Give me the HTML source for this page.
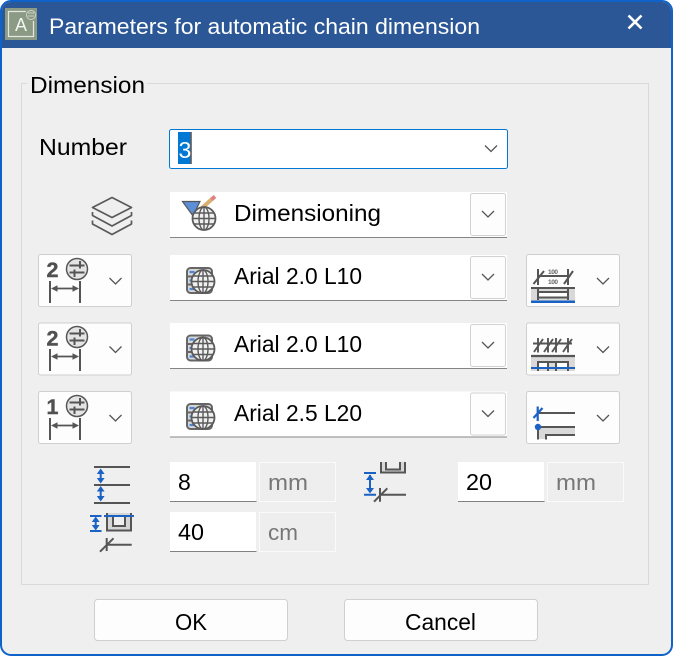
<!DOCTYPE html>
<html><head><meta charset="utf-8"><style>
html,body{margin:0;padding:0;background:#fff;width:673px;height:656px;overflow:hidden}
svg{display:block;position:absolute;left:0;top:0}
text{font-family:"Liberation Sans",sans-serif;fill:#000}
</style></head><body>
<svg width="673" height="656" viewBox="0 0 673 656" xmlns="http://www.w3.org/2000/svg">
<defs>
<g id="chev"><path d="M0 0L6 6L12 0" fill="none" stroke="#555" stroke-width="1.300"/></g>
<g id="globe" fill="none" stroke="#5a5a5a" stroke-width="1.400">
<circle cx="0" cy="0" r="11.500" fill="#f0f0f0" stroke-width="1.800"/>
<ellipse cx="0" cy="0" rx="5" ry="11.500"/>
<path d="M0 -11.500V11.500M-11.500 0H11.500M-10 -5.500H10M-10 5.500H10"/>
</g>
<g id="srv">
<rect x="187" y="1" width="25" height="25" rx="3.500" fill="#d8d8d8" stroke="#666" stroke-width="2"/>
<path d="M187 9.500H212M187 17.500H212" stroke="#666" stroke-width="2"/>
<path d="M189.500 5H194.500M189.500 13.500H194.500M189.500 22H194.500" stroke="#4a86d8" stroke-width="2.200"/>
<use href="#globe" transform="translate(203,14.500)"/>
</g>
<g id="dim">
<path d="M50 0V22M80 0V22" stroke="#555" stroke-width="2"/>
<path d="M53 7.500H77" stroke="#555" stroke-width="1.800"/>
<path d="M51 7.500L57.500 4.300V10.700ZM79 7.500L72.500 4.300V10.700Z" fill="#555"/>
</g>
<g id="eq">
<circle cx="77" cy="0" r="10.500" fill="#e4e4e4" stroke="#555" stroke-width="1.500"/>
<path d="M69.500 -3.500H84.500M69.500 3.500H84.500M80 -8V-0.500M74.500 0.500V8" stroke="#555" stroke-width="2" fill="none"/>
</g>
<g id="combo">
<rect x="170" y="0" width="337" height="45" fill="#fff"/>
<path d="M170 45.500H507" stroke="#858585" stroke-width="1"/>
<rect x="470.500" y="1.500" width="35" height="42" rx="2" fill="#fdfdfd" stroke="#d2d2d2"/>
<use href="#chev" transform="translate(482,19)"/>
</g>
<g id="btn">
<rect x="38.500" y="0.500" width="93" height="52" rx="2" fill="#fdfdfd" stroke="#cfcfcf"/>
<use href="#chev" transform="translate(109.500,24)"/>
</g>
<g id="rbtn">
<rect x="526.500" y="0.500" width="93" height="52" rx="2" fill="#fdfdfd" stroke="#cfcfcf"/>
<use href="#chev" transform="translate(597,24)"/>
</g>
</defs>

<!-- window -->
<rect x="1" y="1" width="671" height="654" rx="10" fill="#efefef" stroke="#0f62c8" stroke-width="2"/>
<path d="M2 48V11A9 9 0 0 1 11 2H662A9 9 0 0 1 671 11V48Z" fill="#2b5797"/>

<!-- title icon -->
<rect x="5" y="8" width="32" height="32" fill="#8b9a85"/>
<rect x="8.500" y="11.500" width="25" height="25" fill="none" stroke="#e4e8e0" stroke-width="1.200"/>
<rect x="26" y="8" width="11" height="13" fill="#8b9a85"/>
<circle cx="31" cy="15" r="4.500" fill="none" stroke="#cdd3c8"/>
<path d="M28 13H34M28 16H34" stroke="#cdd3c8"/>
<text x="15" y="31" font-size="18" style="fill:#f3f5f0" textLength="12" lengthAdjust="spacingAndGlyphs">A</text>
<text x="49" y="34" font-size="22" style="fill:#fff" textLength="431" lengthAdjust="spacingAndGlyphs">Parameters for automatic chain dimension</text>
<path d="M628.500 15.500L641.500 28.500M641.500 15.500L628.500 28.500" stroke="#fff" stroke-width="2.600"/>

<!-- group -->
<rect x="21.500" y="83.500" width="627" height="501" fill="none" stroke="#d9d9d9"/>
<rect x="27" y="74" width="120" height="20" fill="#efefef"/>
<text x="30" y="93" font-size="23" textLength="115" lengthAdjust="spacingAndGlyphs">Dimension</text>

<!-- Number -->
<text x="39" y="155" font-size="23" textLength="88" lengthAdjust="spacingAndGlyphs">Number</text>
<rect x="169.500" y="129.500" width="338" height="39" rx="2" fill="#fff" stroke="#0078d4"/>
<rect x="178" y="132" width="13" height="32" fill="#0078d4"/>
<rect x="191" y="132" width="1" height="32" fill="#c8641e"/>
<text x="178.500" y="158" font-size="23" style="fill:#fff">3</text>
<use href="#chev" transform="translate(485,145.500)"/>

<!-- layers -->
<g fill="none" stroke="#5a5a5a" stroke-width="1.700" stroke-linejoin="round">
<path d="M92.500 207.500L112 197.500L131.500 207.500L112 217.500Z"/>
<path d="M92.500 212L92.500 215.500L112 226L131.500 215.500L131.500 212"/>
<path d="M92.500 220.500L92.500 224L112 234.500L131.500 224L131.500 220.500"/>
</g>

<!-- combos -->
<use href="#combo" transform="translate(0,192)"/>
<use href="#combo" transform="translate(0,255)"/>
<use href="#combo" transform="translate(0,323)"/>
<use href="#combo" transform="translate(0,391.500)"/>
<text x="234" y="221" font-size="23" textLength="147" lengthAdjust="spacingAndGlyphs">Dimensioning</text>
<text x="234" y="284" font-size="23" textLength="128" lengthAdjust="spacingAndGlyphs">Arial 2.0 L10</text>
<text x="234" y="352" font-size="23" textLength="128" lengthAdjust="spacingAndGlyphs">Arial 2.0 L10</text>
<text x="234" y="421" font-size="23" textLength="128" lengthAdjust="spacingAndGlyphs">Arial 2.5 L20</text>

<!-- dimensioning icon -->
<path d="M182.500 201.500H200L193 216Z" fill="#5d8fd9" stroke="#555" stroke-width="1.200"/>
<path d="M202 208L212 199" stroke="#d9b070" stroke-width="4"/>
<path d="M211.500 199.500L215 196.500" stroke="#e08080" stroke-width="4"/>
<use href="#globe" transform="translate(204,218.500)"/>

<!-- server icons -->
<use href="#srv" transform="translate(0,267)"/>
<use href="#srv" transform="translate(0,334.500)"/>
<use href="#srv" transform="translate(0,403)"/>

<!-- left buttons -->
<use href="#btn" transform="translate(0,254)"/>
<use href="#btn" transform="translate(0,322.500)"/>
<use href="#btn" transform="translate(0,391)"/>
<text x="46.500" y="277" font-size="21.500" font-weight="700" style="fill:#505050;stroke:#505050;stroke-width:.4">2</text>
<text x="46.500" y="345.500" font-size="21.500" font-weight="700" style="fill:#505050;stroke:#505050;stroke-width:.4">2</text>
<text x="46.500" y="414" font-size="21.500" font-weight="700" style="fill:#505050;stroke:#505050;stroke-width:.4">1</text>
<use href="#eq" transform="translate(0,269)"/>
<use href="#eq" transform="translate(0,337)"/>
<use href="#eq" transform="translate(0,406)"/>
<use href="#dim" transform="translate(0,281)"/>
<use href="#dim" transform="translate(0,349)"/>
<use href="#dim" transform="translate(0,418)"/>

<!-- right buttons -->
<use href="#rbtn" transform="translate(0,254)"/>
<use href="#rbtn" transform="translate(0,322.500)"/>
<use href="#rbtn" transform="translate(0,391)"/>

<!-- right icon 1 -->
<rect x="531" y="287" width="44" height="15" fill="#d9d9d9"/>
<rect x="538" y="291" width="30" height="6" fill="#fff"/>
<path d="M538 269V285M568 269V285M533.500 284L544 271M564 284L573 271M538 276H568" stroke="#555" stroke-width="2" fill="none"/>
<text x="548" y="274" font-size="6.500" font-weight="700" style="fill:#666" textLength="10">100</text>
<text x="548" y="284" font-size="6.500" font-weight="700" style="fill:#666" textLength="10">100</text>
<path d="M531 288H575M538 292H568M538 297.500H568" stroke="#555" stroke-width="2"/>
<path d="M538 288V300M568 288V300" stroke="#555" stroke-width="2"/>
<rect x="531" y="300.500" width="44" height="2.500" fill="#1a62c4"/>

<!-- right icon 2 -->
<rect x="531" y="357" width="44" height="14" fill="#d9d9d9"/>
<rect x="538.500" y="362" width="9" height="6" fill="#fff"/><rect x="556.500" y="362" width="11" height="6" fill="#fff"/>
<path d="M538 338V352.500M548 338V352.500M556 338V352.500M568 338V352.500M534 352L543 339M544 352L553 339M552 352L561 339M563 352L572 339M533 343.500H572" stroke="#555" stroke-width="1.900" fill="none"/>
<path d="M531 356H575" stroke="#555" stroke-width="2.200"/>
<path d="M538 371V362H568V371M548 362V371M556 362V371" stroke="#555" stroke-width="2" fill="none"/>
<rect x="531" y="367" width="44" height="2" fill="#1a62c4"/>

<!-- right icon 3 -->
<path d="M538 427H575V435H546V439H538Z" fill="#d9d9d9"/>
<path d="M538 413H575M538 427H575" stroke="#555" stroke-width="2"/>
<path d="M538 427V439.500M546 439.500V435H575" stroke="#555" stroke-width="2" fill="none"/>
<path d="M537.700 406.500V421M533.500 418L542.500 408" stroke="#1a62c4" stroke-width="2.200"/>
<circle cx="538" cy="427" r="3.200" fill="#1a62c4"/>

<!-- inputs -->
<g fill="#fff">
<rect x="170" y="462" width="86" height="40"/>
<rect x="170" y="512" width="86" height="40"/>
<rect x="458" y="462" width="86" height="40"/>
</g>
<path d="M170 501.500H256.500M170 551.500H256.500M458 501.500H544.500" stroke="#808080"/>
<g fill="#eeeeee" stroke="#fafafa">
<rect x="259.500" y="462.500" width="76" height="39"/>
<rect x="259.500" y="512.500" width="76" height="39"/>
<rect x="547.500" y="462.500" width="76" height="39"/>
</g>
<text x="178" y="490" font-size="23">8</text>
<text x="178" y="540" font-size="23" textLength="26" lengthAdjust="spacingAndGlyphs">40</text>
<text x="466" y="490" font-size="23" textLength="26" lengthAdjust="spacingAndGlyphs">20</text>
<text x="268" y="490" font-size="22" style="fill:#777" textLength="40" lengthAdjust="spacingAndGlyphs">mm</text>
<text x="268" y="540" font-size="22" style="fill:#777" textLength="30" lengthAdjust="spacingAndGlyphs">cm</text>
<text x="556" y="490" font-size="22" style="fill:#777" textLength="40" lengthAdjust="spacingAndGlyphs">mm</text>

<!-- bottom icon A -->
<path d="M94 467H130M94 485H130M94 503H130" stroke="#555" stroke-width="2"/>
<path d="M100.700 470V482M100.700 488V500" stroke="#1a62c4" stroke-width="2"/>
<path d="M100.700 468.500L96.800 474H104.600ZM100.700 483.500L96.800 478H104.600ZM100.700 486L96.800 491.500H104.600ZM100.700 501.500L96.800 496H104.600Z" fill="#1a62c4"/>

<!-- bottom icon B -->
<rect x="106" y="513" width="26" height="18" fill="#d6d6d6"/>
<path d="M107 513V530.500H131V513" fill="none" stroke="#555" stroke-width="2"/>
<path d="M113 516V526H125V516" fill="#efefef" stroke="#555" stroke-width="2"/>
<path d="M104 516H134M90 516H101.500M90 531H101.500" stroke="#1a62c4" stroke-width="2"/>
<path d="M95.700 518V529" stroke="#1a62c4" stroke-width="2"/>
<path d="M95.700 516.500L91.800 522H99.600ZM95.700 530.500L91.800 525H99.600Z" fill="#1a62c4"/>
<path d="M106 544.700H131.700M100 551.700L113.500 538.300M106.700 538V551" stroke="#555" stroke-width="2"/>

<!-- bottom icon C -->
<path d="M380 462V473H406V462" fill="#d6d6d6"/>
<path d="M386 462V469.500H400V462" fill="#efefef" stroke="#555" stroke-width="2"/>
<path d="M381 462V472.500H405V462" fill="none" stroke="#555" stroke-width="2"/>
<path d="M364 473H376M364 494.700H376" stroke="#1a62c4" stroke-width="2"/>
<path d="M370 475V492" stroke="#1a62c4" stroke-width="2"/>
<path d="M370 474.500L366 480H374ZM370 493.500L366 488H374Z" fill="#1a62c4"/>
<path d="M380 494.700H406M374 501.700L387.300 488.300M380 488V501.700" stroke="#555" stroke-width="2"/>

<!-- buttons -->
<rect x="94.500" y="599.500" width="193" height="41" rx="3" fill="#fdfdfd" stroke="#cfcfcf"/>
<rect x="344.500" y="599.500" width="193" height="41" rx="3" fill="#fdfdfd" stroke="#cfcfcf"/>
<text x="175" y="630" font-size="23" textLength="32" lengthAdjust="spacingAndGlyphs">OK</text>
<text x="405" y="630" font-size="23" textLength="71" lengthAdjust="spacingAndGlyphs">Cancel</text>
</svg>
</body></html>
